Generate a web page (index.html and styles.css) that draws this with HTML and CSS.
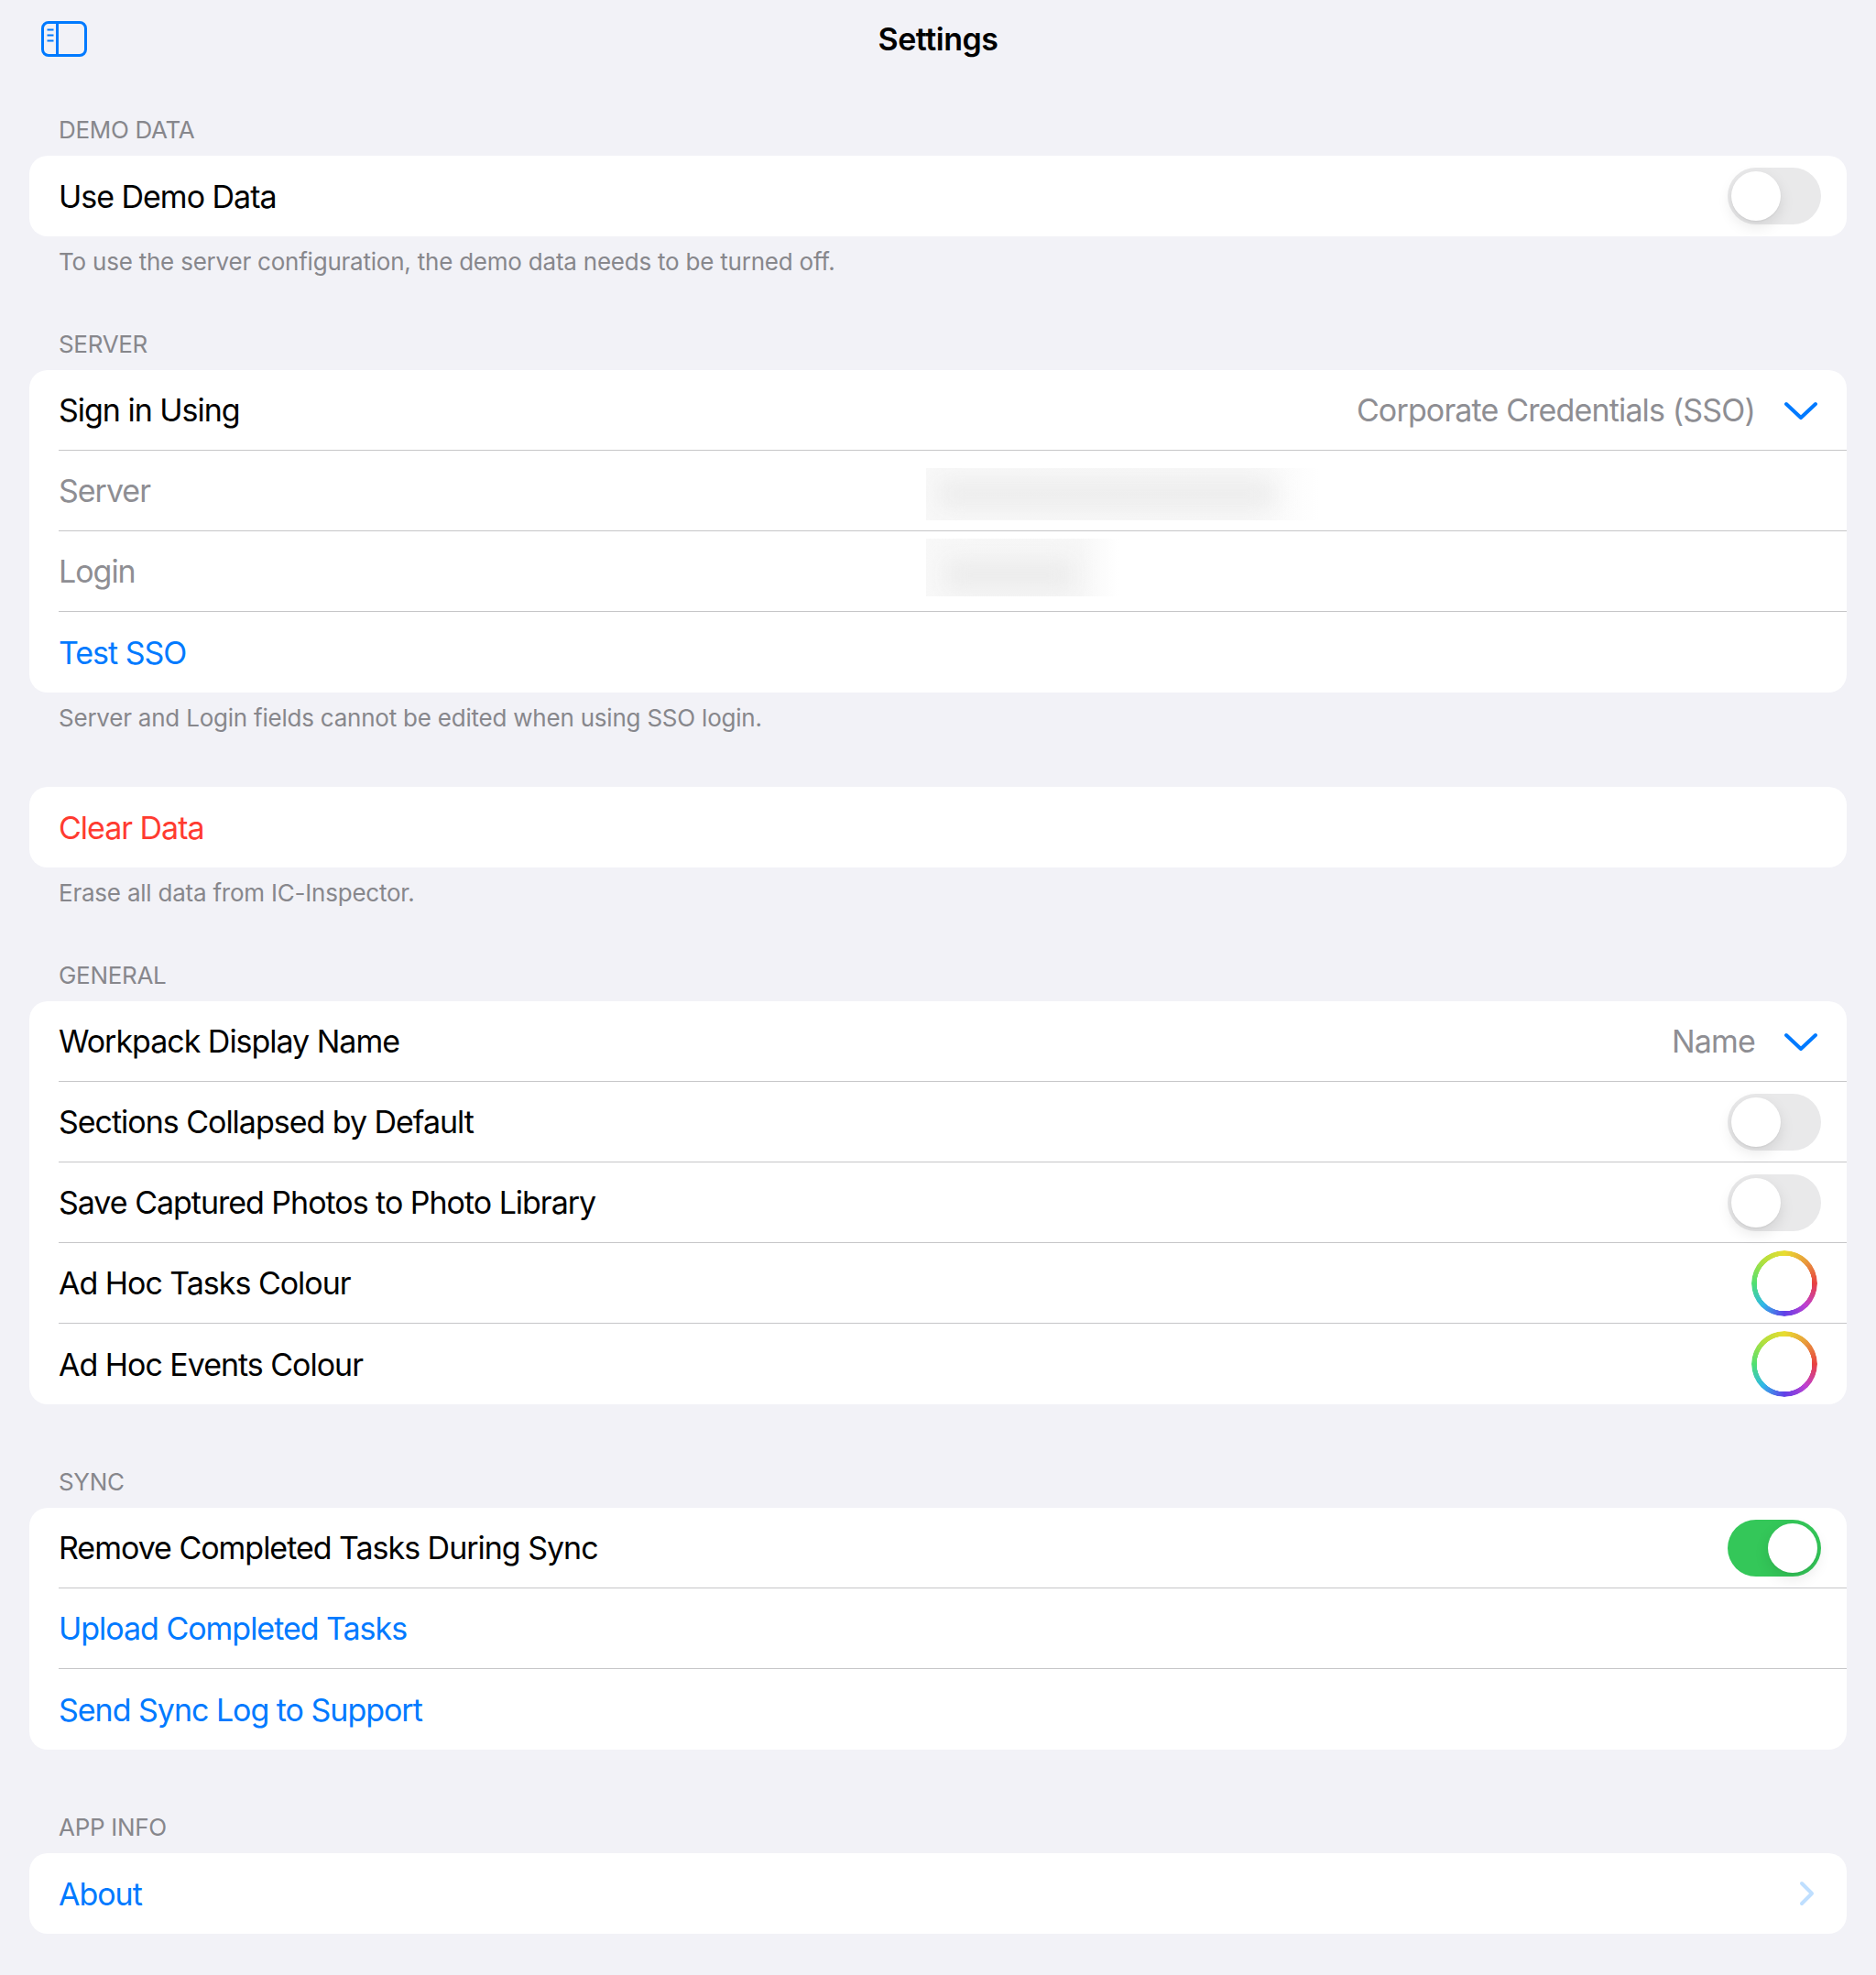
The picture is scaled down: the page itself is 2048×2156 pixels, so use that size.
FILE: index.html
```html
<!DOCTYPE html>
<html lang="en">
<head>
<meta charset="utf-8">
<title>Settings</title>
<link rel="stylesheet" href="styles.css">
</head>
<body>
<header class="nav">
  <svg class="nav-icon" width="50" height="39" viewBox="0 0 50 39" fill="none" stroke="#007aff" stroke-width="3">
    <rect x="1.5" y="1.5" width="47" height="36" rx="6.5"/>
    <path d="M17.5 1.5v36"/>
    <path d="M6.5 9.5h7M6.5 15.5h7M6.5 21.5h7" stroke-width="2"/>
  </svg>
  <h1 class="nav-title">Settings</h1>
</header>
<main>
  <section class="section section-first">
    <h2 class="head">DEMO DATA</h2>
    <div class="card">
      <div class="row"><span>Use Demo Data</span><span class="toggle"></span></div>
    </div>
    <p class="foot">To use the server configuration, the demo data needs to be turned off.</p>
  </section>
  <section class="section">
    <h2 class="head">SERVER</h2>
    <div class="card">
      <div class="row"><span>Sign in Using</span><span class="value">Corporate Credentials (SSO)</span><svg class="chev-down" width="36" height="20" viewBox="0 0 36 20" fill="none" stroke="#007aff" stroke-width="4" stroke-linecap="round" stroke-linejoin="round"><path d="M2 3l16 15L34 3"/></svg></div>
      <div class="row row-field"><span class="muted label">Server</span><span class="redact redact-server"><span class="redact-ink"></span></span></div>
      <div class="row row-field"><span class="muted label">Login</span><span class="redact redact-login"><span class="redact-ink"></span></span></div>
      <div class="row"><span class="link">Test SSO</span></div>
    </div>
    <p class="foot">Server and Login fields cannot be edited when using SSO login.</p>
  </section>
  <section class="section section-plain">
    <div class="card">
      <div class="row"><span class="danger">Clear Data</span></div>
    </div>
    <p class="foot">Erase all data from IC-Inspector.</p>
  </section>
  <section class="section">
    <h2 class="head">GENERAL</h2>
    <div class="card">
      <div class="row"><span>Workpack Display Name</span><span class="value">Name</span><svg class="chev-down" width="36" height="20" viewBox="0 0 36 20" fill="none" stroke="#007aff" stroke-width="4" stroke-linecap="round" stroke-linejoin="round"><path d="M2 3l16 15L34 3"/></svg></div>
      <div class="row"><span>Sections Collapsed by Default</span><span class="toggle"></span></div>
      <div class="row"><span>Save Captured Photos to Photo Library</span><span class="toggle"></span></div>
      <div class="row"><span>Ad Hoc Tasks Colour</span><span class="well"></span></div>
      <div class="row"><span>Ad Hoc Events Colour</span><span class="well"></span></div>
    </div>
  </section>
  <section class="section section-tall">
    <h2 class="head">SYNC</h2>
    <div class="card">
      <div class="row"><span>Remove Completed Tasks During Sync</span><span class="toggle toggle-on"></span></div>
      <div class="row"><span class="link">Upload Completed Tasks</span></div>
      <div class="row"><span class="link">Send Sync Log to Support</span></div>
    </div>
  </section>
  <section class="section section-tall section-last">
    <h2 class="head">APP INFO</h2>
    <div class="card">
      <div class="row"><span class="link">About</span><svg class="chev-right" width="18" height="28" viewBox="0 0 18 28" fill="none" stroke="#bfdfff" stroke-width="4" stroke-linecap="round" stroke-linejoin="round"><path d="M3 3l11 11L3 25"/></svg></div>
    </div>
  </section>
</main>
</body>
</html>
```
FILE: styles.css
```css
* { box-sizing: border-box; }
html, body { margin: 0; padding: 0; }
body {
  background: #f2f2f7;
  color: #000;
  font-family: Inter, "Liberation Sans", sans-serif;
  font-size: 34px;
  letter-spacing: -0.03em;
  min-height: 2156px;
}
.nav {
  display: grid;
  grid-template-columns: 1fr auto 1fr;
  align-items: center;
  height: 84px;
  padding: 0 45px;
}
.nav-title {
  margin: 0;
  font-size: 34px;
  font-weight: 600;
  letter-spacing: -0.5px;
  grid-column: 2;
  grid-row: 1;
}
.nav-icon { grid-column: 1; grid-row: 1; }
.section { margin-top: 58px; }
.section-first { margin-top: 42px; }
.section-plain { margin-top: 59px; }
.section-tall { margin-top: 69px; }
.head, .foot {
  margin: 0;
  padding: 0 64px;
  color: #87878c;
  font-size: 26px;
  font-weight: 400;
  line-height: 32px;
}
.head { padding-bottom: 12px; letter-spacing: -0.012em; }
.foot { padding-top: 12px; letter-spacing: -0.0085em; }
.card {
  margin: 0 32px;
  background: #fff;
  border-radius: 20px;
  overflow: hidden;
}
.row {
  display: flex;
  align-items: center;
  height: 88px;
  margin-left: 32px;
  padding-right: 32px;
  border-bottom: 1px solid #c6c6c8;
}
.row:last-child { border-bottom: 0; }
.value { margin-left: auto; color: #8e8e93; letter-spacing: -0.025em; }
.muted { color: #8e8e93; }
.link { color: #007aff; }
.danger { color: #ff3b30; }
.chev-down { margin-left: 32px; flex: none; }
.chev-right { margin-left: auto; flex: none; margin-right: 2px; }
.label { width: 947px; flex: none; }
.redact {
  display: flex;
  overflow: hidden;
  background: linear-gradient(90deg, #f8f8f8, #f7f7f7 80%, #fff);
}
.redact-ink {
  flex: 1;
  background: #ececec;
  filter: blur(12px);
}
.redact-server { width: 430px; height: 57px; margin-top: 8px; padding: 14px 50px 14px 14px; }
.redact-login { width: 210px; height: 63px; margin-top: -8px; padding: 22px 50px 6px 22px; }
.toggle {
  position: relative;
  margin-left: auto;
  flex: none;
  width: 102px;
  height: 62px;
  border-radius: 31px;
  background: #e9e9ea;
  margin-right: -4px;
}
.toggle::after {
  content: "";
  position: absolute;
  top: 4px;
  left: 4px;
  width: 54px;
  height: 54px;
  border-radius: 50%;
  background: #fff;
  box-shadow: 0 6px 16px rgba(0, 0, 0, 0.1), 0 1px 2px rgba(0, 0, 0, 0.06);
}
.toggle-on { background: #34c759; }
.toggle-on::after { left: 44px; }
.well {
  margin-left: auto;
  flex: none;
  width: 72px;
  height: 72px;
  border-radius: 50%;
  background: conic-gradient(#e8dc30, #e89a3c 45deg, #e84040 90deg, #c040d0 135deg, #6040e8 180deg, #30b8e8 225deg, #50e070 270deg, #b0e040 315deg, #e8dc30);
  -webkit-mask: radial-gradient(circle closest-side, transparent 30px, #000 30.5px);
  mask: radial-gradient(circle closest-side, transparent 30px, #000 30.5px);
}
```
